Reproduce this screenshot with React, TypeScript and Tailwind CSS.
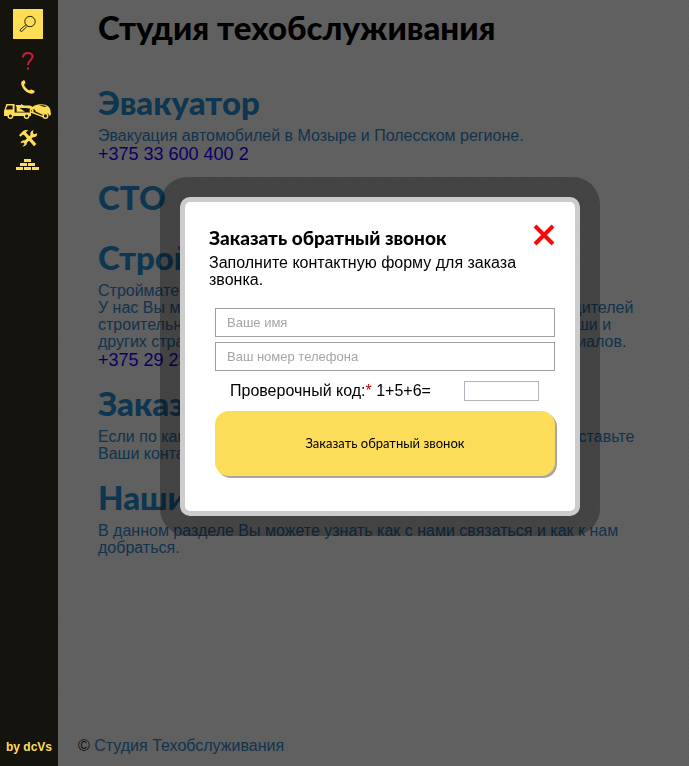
import React from "react";

const heading = "font-[Lato,sans-serif] font-black";

function Section({
  title,
  phone,
  children,
}: {
  title: string;
  phone?: string;
  children?: React.ReactNode;
}) {
  return (
    <section className={phone ? "mb-4" : "mb-[18px]"}>
      <a href="#" className="block text-[#2387c8]">
        <h2 className={`${heading} pb-2 text-[33px] leading-[34px]`}>{title}</h2>
        {children && <p className="text-[16px] leading-[17px] text-[#327fc0]">{children}</p>}
      </a>
      {phone && (
        <a href="#" className="block text-[18px] leading-5 text-[#1800ff]">
          {phone}
        </a>
      )}
    </section>
  );
}

function SearchIcon() {
  return (
    <svg width="18" height="18" viewBox="0 0 18 18" fill="none" stroke="#2a2510" strokeWidth="1">
      <circle cx="11" cy="6.5" r="5.2" />
      <path d="M7.2 9.6 L1.2 14.6 Q0.6 16.6 2.8 16.4 L8.4 11.2" />
    </svg>
  );
}

function QuestionIcon() {
  return (
    <svg width="12" height="18" viewBox="0 0 12 18" fill="none" stroke="#c4203a" strokeWidth="2">
      <path d="M1 5.4 C1 -0.6 10.8 -0.4 10.6 4.8 C10.4 8 6 8.2 6 13" />
      <path d="M6 15.4 V17.8" />
    </svg>
  );
}

function PhoneIcon() {
  return (
    <svg width="14" height="14" viewBox="0 0 14 14" fill="#ffdd55">
      <path d="M1 1.2 L3 0 Q3.8 0.2 4.4 2.8 Q4.4 3.8 3 4.6 Q4.4 8.6 8.6 10.6 Q9.4 9.2 10.2 9.4 L13.4 10.8 Q14.2 11.4 12.8 13 Q11 14.4 7.6 13 Q2.6 10.6 0.6 5.4 Q-0.4 2.4 1 1.2 Z" />
    </svg>
  );
}

function TowTruckIcon() {
  return (
    <svg width="48" height="16" viewBox="0 0 48 16" fill="#ffdd55">
      <path d="M2.4 1 H10.6 V9.6 H27 V13 H0 V8 Z" />
      <path d="M3.6 2.4 H8.6 V6.6 H1.8 Z" fill="#14130d" />
      <path d="M12.6 8.8 V3.6 H11.8 V2 H17 V1 L20 2.6 H26 L29 4 L28 6 L22 5 H15.6 L21 8.8 Z" />
      <path d="M27 8 L40 13.4 L39.4 14.6 L26 9.4 Z" />
      <path d="M26.4 5.2 L30.6 2.6 Q36 0.4 41.4 1.8 Q45.4 3.4 46.4 7 L47 11.6 L45.6 13 Q44.6 9.8 41.4 10 Q39.4 10 38.6 11.8 L31.6 8.6 Q31.4 6 28.8 6 Q27.4 6 26.8 7 Z" />
      <path d="M35 2.4 Q39 1.8 42.6 3.2 L41 4 Z" fill="#14130d" />
      <g fill="#14130d" stroke="#ffdd55" strokeWidth="1.5">
        <circle cx="6.4" cy="13" r="2.3" />
        <circle cx="22.6" cy="13" r="2.3" />
        <circle cx="41.4" cy="12.9" r="2.3" />
        <circle cx="27.6" cy="7.8" r="1.4" />
      </g>
    </svg>
  );
}

function ToolsIcon() {
  return (
    <svg width="19" height="17" viewBox="0 0 19 17" fill="#ffdd55">
      <path d="M0 5.2 L3.8 1.2 Q6.4 -0.6 9.8 0.6 Q7.4 1.2 7 2.6 L17.4 14 L15 16.2 L5 5 L3.4 4.8 L1.8 6.8 Z" />
      <path d="M14.6 0.2 L13.8 3 L15.2 4.2 L18.2 3.2 Q18.4 7.2 14 7.2 L8 12.6 Q7.8 16.6 3.4 16.4 L5.6 14 L4.4 12.4 L1.6 13.2 Q2.2 9.8 6 10.2 L11.4 5 Q10.8 0.6 14.6 0.2 Z" />
    </svg>
  );
}

function BricksIcon() {
  return (
    <svg width="24" height="12" viewBox="0 0 24 12" fill="#ffdd55">
      <path d="M8 0h7v3H8z M4 4h7v3H4z M12 4h7v3h-7z M0 8h7v3H0z M8 8h7v3H8z M16 8h7v3h-7z" />
    </svg>
  );
}

function Sidebar() {
  return (
    <nav className="relative z-20 flex w-[58px] shrink-0 flex-col items-center justify-between bg-[#14130d] pt-[9px] pb-3">
      <div className="flex flex-col items-center pr-[2px]">
        <button aria-label="Поиск" className="mb-[13px] flex size-[30px] items-center justify-center bg-[#ffdd55]">
          <SearchIcon />
        </button>
        <a href="#" aria-label="Вопросы" className="mb-[10px]"><QuestionIcon /></a>
        <a href="#" aria-label="Телефон" className="mb-[9px]"><PhoneIcon /></a>
        <a href="#" aria-label="Эвакуатор" className="mb-[11px]"><TowTruckIcon /></a>
        <a href="#" aria-label="СТО" className="mb-[12px]"><ToolsIcon /></a>
        <a href="#" aria-label="Стройматериалы"><BricksIcon /></a>
      </div>
      <a href="#" className="text-[12px] leading-[14px] font-bold whitespace-nowrap text-[#ffdd55]">by dcVs</a>
    </nav>
  );
}

function CallbackDialog() {
  const field =
    "h-[29px] w-full border border-[#a0a0a0] bg-white px-[11px] text-[13px] text-black outline-none placeholder:text-[#a5a5a5]";
  return (
    <div
      role="dialog"
      aria-labelledby="dialog-title"
      className="w-[400px] rounded-[10px] border-[5px] border-[#ccc] bg-white pt-[22px] pr-5 pb-[35px] pl-6 shadow-[0_0_0_20px_rgba(0,0,0,0.3)]"
    >
      <div className="flex items-start justify-between">
        <h3 id="dialog-title" className={`${heading} text-[19px] leading-7`}>Заказать обратный звонок</h3>
        <button aria-label="Закрыть">
          <svg width="22" height="22" viewBox="0 0 22 22" stroke="#f80808" strokeWidth="4">
            <path d="M2 2 L20 20 M20 2 L2 20" />
          </svg>
        </button>
      </div>
      <p className="mt-[2px] text-[16px] leading-[17px]">Заполните контактную форму для заказа звонка.</p>
      <form className="mt-5 flex flex-col pl-[6px]" onSubmit={(e) => e.preventDefault()}>
        <input aria-label="Ваше имя" placeholder="Ваше имя" className={`${field} mb-[5px]`} />
        <input aria-label="Ваш номер телефона" placeholder="Ваш номер телефона" type="tel" className={field} />
        <div className="mt-[10px] mb-[10px] flex items-center justify-between pr-4 pl-[15px]">
          <label htmlFor="code" className="text-[16px] leading-5">
            Проверочный код:<span className="text-[#c00]">*</span> 1+5+6=
          </label>
          <input id="code" className="h-5 w-[75px] border border-[#b4b4bc] bg-white px-1 text-[13px] outline-none" />
        </div>
        <button className="h-[65px] rounded-[14px] bg-[#fbdd5a] font-[Lato,sans-serif] text-[13px] text-black shadow-[2px_2px_0_#aaa5a0]">
          Заказать обратный звонок
        </button>
      </form>
    </div>
  );
}

export default function App() {
  return (
    <div className="flex min-h-screen bg-[#f0f0f0] font-['Liberation_Sans',Arial,sans-serif]">
      <Sidebar />
      <div className="flex min-w-0 flex-1 flex-col justify-between bg-[repeating-linear-gradient(45deg,#f2f2f2_0px,#f2f2f2_1px,#ededed_1px,#ededed_3px)]">
        <main className="pt-[6px] pr-10 pl-10">
          <h1 className={`${heading} mb-[37px] text-[33px] leading-[42px]`}>Студия техобслуживания</h1>
          <Section title="Эвакуатор" phone="+375 33 600 400 2">
            Эвакуация автомобилей в Мозыре и Полесском регионе.
          </Section>
          <Section title="СТО" />
          <Section title="Стройматериалы" phone="+375 29 234 56 78">
            Стройматериалы в Мозыре.
            <br />
            У нас Вы можете приобрести различные материалы от производителей
            строительных смесей и инструмента из России, Беларуси, Польши и
            <br />
            других стран. Всегда в наличии большой и полный выбор материалов.
          </Section>
          <Section title="Заказать звонок">
            Если по каким-то причинам Вы не можете до нас дозвониться, оставьте Ваши контактные данные.
          </Section>
          <Section title="Наши контакты">
            В данном разделе Вы можете узнать как с нами связаться и как к нам добраться.
          </Section>
        </main>
        <footer className="px-5 pb-[10px] text-[16px] leading-5 text-[#222]">
          © <a href="#" className="text-[#327fc0]">Студия Техобслуживания</a>
        </footer>
      </div>
      <div className="fixed inset-0 z-10 flex items-start justify-center bg-black/60 pt-[197px] pl-[71px]">
        <CallbackDialog />
      </div>
    </div>
  );
}
